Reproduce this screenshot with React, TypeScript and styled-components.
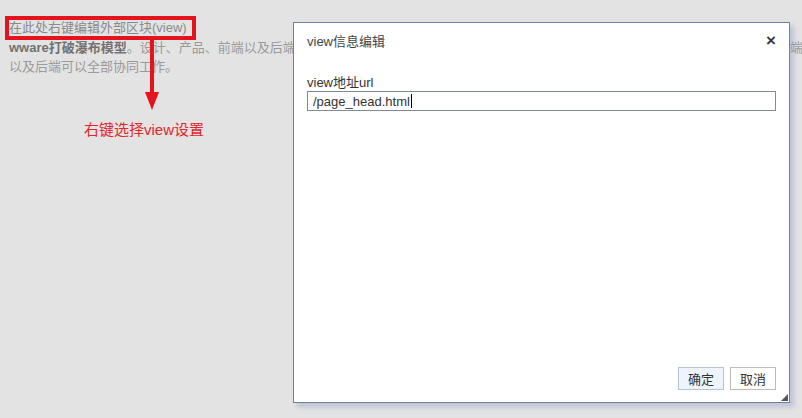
import * as React from "react";
import styled, { createGlobalStyle } from "styled-components";

const GlobalStyle = createGlobalStyle`
  html, body {
    margin: 0;
    padding: 0;
    background: #e3e3e3;
    overflow: hidden;
  }
  body {
    font-family: "Liberation Sans", "Noto Sans CJK SC", sans-serif;
    font-size: 13px;
  }
`;

const Page = styled.div`
  position: relative;
  width: 802px;
  height: 418px;
  background: #e3e3e3;
  overflow: hidden;
`;

const Content = styled.div`
  padding: 16px 0 0 5px;
  color: #8c8c8c;
`;

const MarkedLine = styled.div`
  display: inline-block;
  border: 4px solid #e5141c;
  padding: 0 5px 0 0;
  line-height: 16px;
  color: #8a8a8a;
`;

const TextLine = styled.div<{ $first?: boolean }>`
  margin-top: ${(p) => (p.$first ? "-2px" : "0")};
  padding-left: 4px;
  line-height: 19px;
  white-space: nowrap;
  color: #9a9a9a;

  b {
    color: #727272;
  }
`;

const Arrow = styled.svg`
  position: absolute;
  left: 143px;
  top: 40px;
`;

const Note = styled.div`
  position: absolute;
  left: 84px;
  top: 120px;
  font-size: 15px;
  line-height: 20px;
  color: #e3262a;
`;

const Dialog = styled.div`
  position: absolute;
  left: 293px;
  top: 22px;
  width: 495px;
  height: 379px;
  display: flex;
  flex-direction: column;
  background: #fff;
  border: 1px solid #6d80a6;
  box-shadow: 4px 4px 5px rgba(120, 135, 185, 0.35);
`;

const Header = styled.div`
  display: flex;
  align-items: center;
  justify-content: space-between;
  height: 35px;
  padding: 0 13px;
  color: #444;
`;

const Close = styled.span`
  font-size: 17px;
  font-weight: bold;
  color: #3a3a3a;
  cursor: pointer;
`;

const Body = styled.div`
  flex: 1;
  padding: 17px 13px 0 13px;
`;

const Label = styled.div`
  line-height: 16px;
  color: #333;
`;

const Input = styled.div`
  display: flex;
  align-items: center;
  height: 18px;
  padding: 0 5px;
  border: 1px solid #7f8b99;
  color: #333;
`;

const Caret = styled.span`
  display: inline-block;
  width: 1px;
  height: 14px;
  margin-left: 1px;
  background: #000;
`;

const Footer = styled.div`
  display: flex;
  justify-content: flex-end;
  gap: 6px;
  padding: 0 13px 12px 0;
  position: relative;
`;

const Button = styled.button<{ $primary?: boolean }>`
  width: 46px;
  height: 23px;
  padding: 0;
  font: inherit;
  color: #333;
  background: ${(p) => (p.$primary ? "#edf4fb" : "#fff")};
  border: 1px solid ${(p) => (p.$primary ? "#b5c3d3" : "#bcbcbc")};
`;

const Grip = styled.svg`
  position: absolute;
  right: 1px;
  bottom: 1px;
`;

export default function App() {
  return (
    <Page>
      <GlobalStyle />
      <Content>
        <MarkedLine>在此处右键编辑外部区块(view)</MarkedLine>
        <TextLine $first>
          <b>wware打破瀑布模型</b>。设计、产品、前端以及后端不再需要相互等待，设计师完成页面原型之后，开发人员便可以直接在此基础上进行前端
        </TextLine>
        <TextLine>以及后端可以全部协同工作。</TextLine>
      </Content>

      <Arrow width="18" height="72" viewBox="0 0 18 72">
        <rect x="7" y="0" width="4" height="56" fill="#e5141c" />
        <polygon points="2,52 16,52 9,70" fill="#e5141c" />
      </Arrow>
      <Note>右键选择view设置</Note>

      <Dialog>
        <Header>
          <span>view信息编辑</span>
          <Close>×</Close>
        </Header>
        <Body>
          <Label>view地址url</Label>
          <Input>
            /page_head.html
            <Caret />
          </Input>
        </Body>
        <Footer>
          <Button $primary>确定</Button>
          <Button>取消</Button>
          <Grip width="7" height="7" viewBox="0 0 7 7">
            <polygon points="7,0 7,7 0,7" fill="#555" />
          </Grip>
        </Footer>
      </Dialog>
    </Page>
  );
}
